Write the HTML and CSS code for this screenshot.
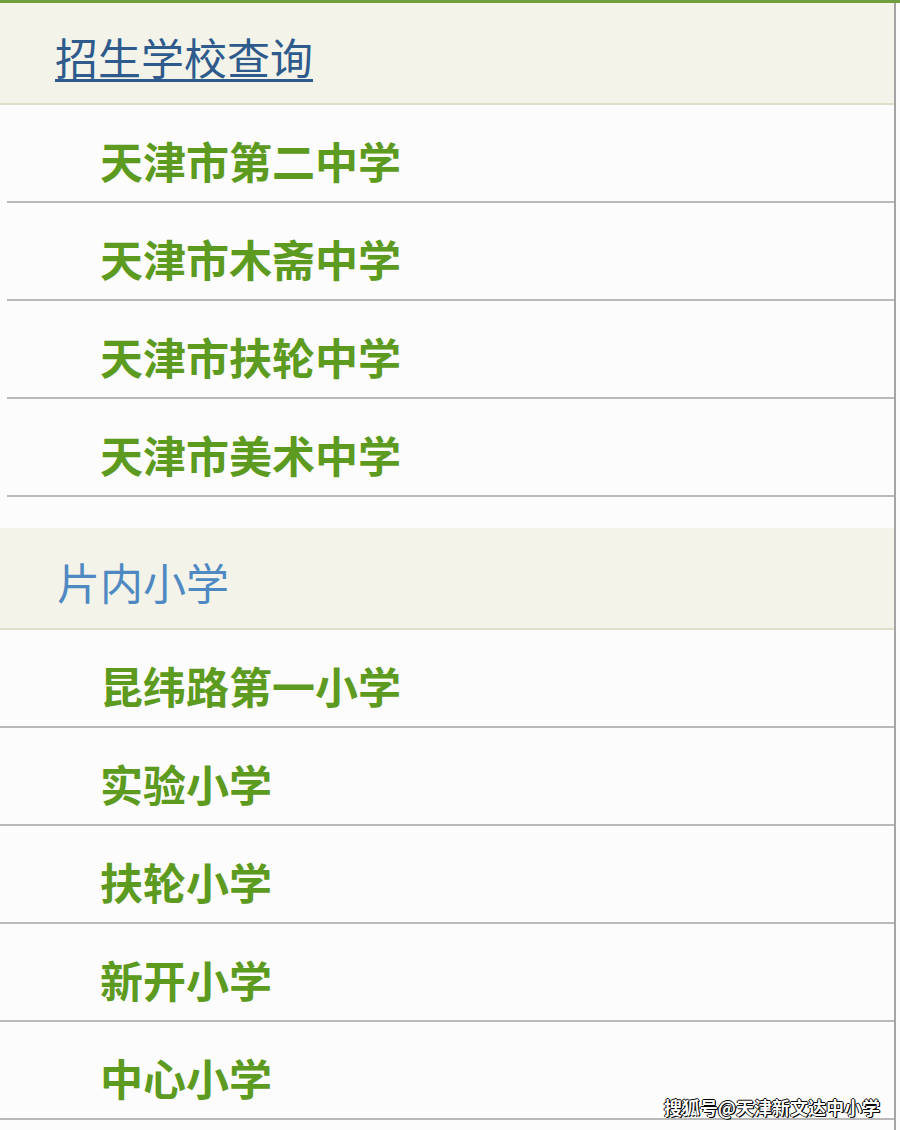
FILE: index.html
```html
<!DOCTYPE html>
<html lang="zh">
<head>
<meta charset="utf-8">
<link rel="stylesheet" href="styles.css">
</head>
<body>
<div class="topbar"></div>
<div class="panel">
  <div class="section-head"><a class="head-link" href="#">招生学校查询</a></div>
  <ul class="list list-inset">
    <li class="row">天津市第二中学</li>
    <li class="row">天津市木斋中学</li>
    <li class="row">天津市扶轮中学</li>
    <li class="row">天津市美术中学</li>
  </ul>
  <div class="spacer"></div>
  <div class="section-head"><span class="head-text">片内小学</span></div>
  <ul class="list">
    <li class="row">昆纬路第一小学</li>
    <li class="row">实验小学</li>
    <li class="row">扶轮小学</li>
    <li class="row">新开小学</li>
    <li class="row">中心小学</li>
  </ul>
</div>
<div class="watermark">搜狐号@天津新文达中小学</div>
</body>
</html>
```

FILE: styles.css
```css
html, body {
  margin: 0;
  padding: 0;
  background: #fdfcfd;
  font-family: "Noto Sans CJK SC", "Noto Sans", sans-serif;
}
body {
  position: relative;
  height: 1130px;
  overflow: hidden;
}
.topbar {
  height: 3px;
  background: #6e9e3e;
}
.panel {
  width: 896px;
  box-sizing: border-box;
  border-right: 2px solid #a4a4a4;
  min-height: 1127px;
}
.section-head {
  height: 102px;
  box-sizing: border-box;
  background: #f3f3e9;
  border-bottom: 2px solid #dfdec8;
  display: flex;
  align-items: center;
  padding-left: 55px;
  padding-top: 6px;
}
.head-link {
  font-size: 43px;
  line-height: 1;
  color: #2e5b8c;
  text-decoration: underline;
  text-decoration-thickness: 3px;
  text-underline-offset: 4px;
}
.head-text {
  font-size: 43px;
  line-height: 1;
  color: #4e89c2;
  padding-left: 2px;
}
.list {
  list-style: none;
  margin: 0;
  padding: 0;
}
.row {
  height: 98px;
  box-sizing: border-box;
  border-bottom: 2px solid #b9b9b9;
  display: flex;
  align-items: center;
  padding-left: 100px;
  padding-top: 14px;
  font-size: 43px;
  font-weight: 700;
  line-height: 1;
  color: #5c9a20;
}
.list-inset .row {
  margin-left: 7px;
  padding-left: 93px;
}
.spacer {
  height: 31px;
}
.watermark {
  position: absolute;
  right: 20px;
  bottom: 10px;
  font-size: 18px;
  font-weight: 700;
  color: #ffffff;
  text-shadow: 1px 1px 0 #000, -1px 0 0 #000, 0 -1px 0 #000, 1px 0 0 #000;
}
```
